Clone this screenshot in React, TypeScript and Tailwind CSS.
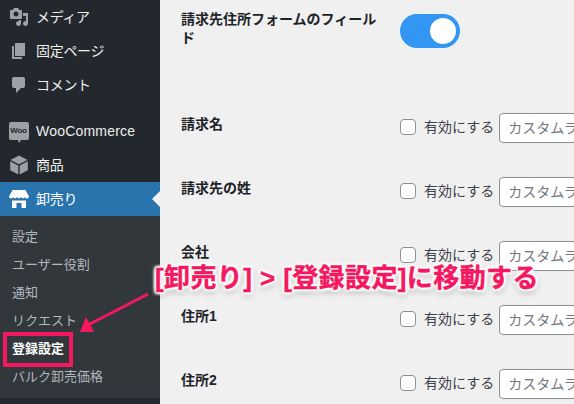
const jp = "font-['Liberation_Sans','Noto_Sans_CJK_JP',sans-serif]";

function MediaIcon() {
  return (
    <svg width="20" height="20" viewBox="0 0 20 20" fill="#9ca1a6">
      <path d="M13 11V4c0-.55-.45-1-1-1h-1.670L9 1H5L3.670 3H2c-.55 0-1 .45-1 1v7c0 .55.45 1 1 1h10c.55 0 1-.45 1-1zM7 4.500c1.380 0 2.500 1.120 2.500 2.500S8.380 9.500 7 9.500 4.500 8.380 4.500 7 5.620 4.500 7 4.500zM14 6h5v10.500c0 1.380-1.120 2.500-2.500 2.500S14 17.880 14 16.500s1.120-2.500 2.500-2.500c.17 0 .34.020.5.050V9h-3V6zm-4 8.050V13h2v3.500c0 1.380-1.120 2.500-2.500 2.500S7 17.880 7 16.500 8.120 14 9.500 14c.17 0 .34.020.5.050z" />
    </svg>
  );
}
function PagesIcon() {
  return (
    <svg width="20" height="20" viewBox="0 0 20 20" fill="#9ca1a6">
      <path d="M6 15V2h10v13H6zm-1 1h8v2H3V5h2v11z" />
    </svg>
  );
}
function CommentIcon() {
  return (
    <svg width="20" height="20" viewBox="0 0 20 20" fill="#9ca1a6">
      <path d="M5 2h9c1.100 0 2 .9 2 2v7c0 1.100-.9 2-2 2h-2l-5 5v-5H5c-1.100 0-2-.9-2-2V4c0-1.100.9-2 2-2z" />
    </svg>
  );
}
function WooIcon() {
  return (
    <span className="relative flex h-[18px] w-5 items-center justify-center rounded-[2px] bg-[#9ca1a6]">
      <span className="font-['Liberation_Sans',sans-serif] text-[8px] leading-none font-bold tracking-[-0.2px] text-[#22282d]">Woo</span>
      <span className="absolute top-[18px] left-[9px] h-0 w-0 border-t-[3px] border-r-[2px] border-l-[1px] border-t-[#9ca1a6] border-r-transparent border-l-transparent" />
    </span>
  );
}
function BoxIcon() {
  return (
    <svg width="20" height="20" viewBox="0 0 20 20" fill="#9ca1a6">
      <path d="M10 .500l8.600 4.400L10 9.300 1.400 4.900z" />
      <path d="M1.200 6.200l8.100 4.200v9.100L1.200 15.200z" />
      <path d="M18.800 6.200l-8.100 4.200v9.100l8.100-4.300z" />
    </svg>
  );
}
function StoreIcon() {
  return (
    <svg width="20" height="18" viewBox="0 0 20 18" fill="#fff">
      <path d="M3.500 0h13L20 6.500a2.100 2.100 0 0 1-4 .8 2.700 2.700 0 0 1-4 0 2.700 2.700 0 0 1-4 0 2.700 2.700 0 0 1-4 0 2.100 2.100 0 0 1-4-.8z" />
      <path d="M3 10.500h14V18h-4.500v-5h-5v5H3z" />
    </svg>
  );
}

function MenuRow({ icon, label, active, latin }: { icon: React.ReactNode; label: string; active?: boolean; latin?: boolean }) {
  return (
    <div className={`relative flex h-[34px] items-center ${active ? "bg-[#2a74ae] text-white" : "text-[#eeeeee]"}`}>
      <span className="flex w-9 shrink-0 items-center justify-center pl-[1px]">{icon}</span>
      <span className={`text-sm ${latin ? "tracking-[0.2px]" : "tracking-[-0.3px]"}`}>{label}</span>
      {active && (
        <span className="absolute top-[9px] right-0 h-0 w-0 border-y-[8px] border-r-[8px] border-y-transparent border-r-[#f0f0f1]" />
      )}
    </div>
  );
}

function SubRow({ label, current }: { label: string; current?: boolean }) {
  return (
    <div className={`flex h-7 items-center pl-3 text-[13px] ${current ? "font-bold text-white" : "text-[#b4b9be]"}`}>
      {label}
    </div>
  );
}

function FieldRow({ label }: { label: string }) {
  return (
    <div className="flex h-16 items-start">
      <div className="w-[219px] shrink-0 pt-[2px] text-sm leading-[18px] font-bold text-[#1d2327]">{label}</div>
      <div className="flex min-w-0 items-start">
        <span className="mt-[6px] h-4 w-4 shrink-0 rounded-[4px] border border-[#8c8f94] bg-white" />
        <span className="mt-[2px] ml-2 shrink-0 text-sm leading-6 whitespace-nowrap text-[#3c434a]">有効にする</span>
        <div className="ml-[5px] flex h-[30px] w-[200px] shrink-0 items-center rounded-[4px] border border-[#8c8f94] bg-white pl-2 text-sm whitespace-nowrap text-[#72777c]">
          カスタムラベル
        </div>
      </div>
    </div>
  );
}

export default function App() {
  return (
    <div className={`relative flex h-[404px] w-[574px] overflow-hidden bg-[#f0f0f1] ${jp}`}>
      <aside className="flex h-full w-40 shrink-0 flex-col bg-[#22282d]">
        <MenuRow icon={<MediaIcon />} label="メディア" />
        <MenuRow icon={<PagesIcon />} label="固定ページ" />
        <MenuRow icon={<CommentIcon />} label="コメント" />
        <div className="h-3" />
        <MenuRow icon={<WooIcon />} label="WooCommerce" latin />
        <MenuRow icon={<BoxIcon />} label="商品" />
        <MenuRow icon={<StoreIcon />} label="卸売り" active />
        <div className="bg-[#32373c] pt-[7px] pb-[7px]">
          <SubRow label="設定" />
          <SubRow label="ユーザー役割" />
          <SubRow label="通知" />
          <SubRow label="リクエスト" />
          <SubRow label="登録設定" current />
          <SubRow label="バルク卸売価格" />
        </div>
      </aside>

      <main className="min-w-0 flex-1 pl-[21px]">
        <div className="flex h-[111px] items-start">
          <div className="w-[219px] shrink-0 pt-[10px] pr-[20px] text-sm leading-[19px] font-bold text-[#1d2327]">
            請求先住所フォームのフィールド
          </div>
          <div className="mt-[14px] flex h-[34px] w-[60px] shrink-0 items-center justify-end rounded-full bg-[#3197f3] pr-1">
            <span className="h-[26px] w-[26px] rounded-full bg-white" />
          </div>
        </div>
        <div className="pt-[2px]">
          <FieldRow label="請求名" />
          <FieldRow label="請求先の姓" />
          <FieldRow label="会社" />
          <FieldRow label="住所1" />
          <FieldRow label="住所2" />
        </div>
      </main>

      <svg className="pointer-events-none absolute top-[290px] left-[76px]" width="80" height="50" viewBox="0 0 80 50">
        <path d="M72 4 L12 35" stroke="#f5175f" strokeWidth="3" fill="none" />
        <path d="M4 42 L10 27 L14 34 L18 42 Z" fill="#f5175f" />
      </svg>
      <div className="pointer-events-none absolute top-[332px] left-[3px] h-[35px] w-[70px] border-[4px] border-[#f5175f]" />
      <div className="pointer-events-none absolute top-[261px] left-[155px] text-[26px] leading-[34px] font-bold tracking-[0.4px] whitespace-nowrap text-[#f5175f] [-webkit-text-stroke:0.4px_#f5175f] [text-shadow:0_0_2px_#fff,0_0_2px_#fff,0_0_3px_#fff,0_0_3px_#fff,2px_2px_3px_#fff,-2px_-2px_3px_#fff,2px_-2px_3px_#fff,-2px_2px_3px_#fff,0_3px_7px_rgba(0,0,0,0.4)]">
        [卸売り] &gt; [登録設定]に移動する
      </div>
    </div>
  );
}
